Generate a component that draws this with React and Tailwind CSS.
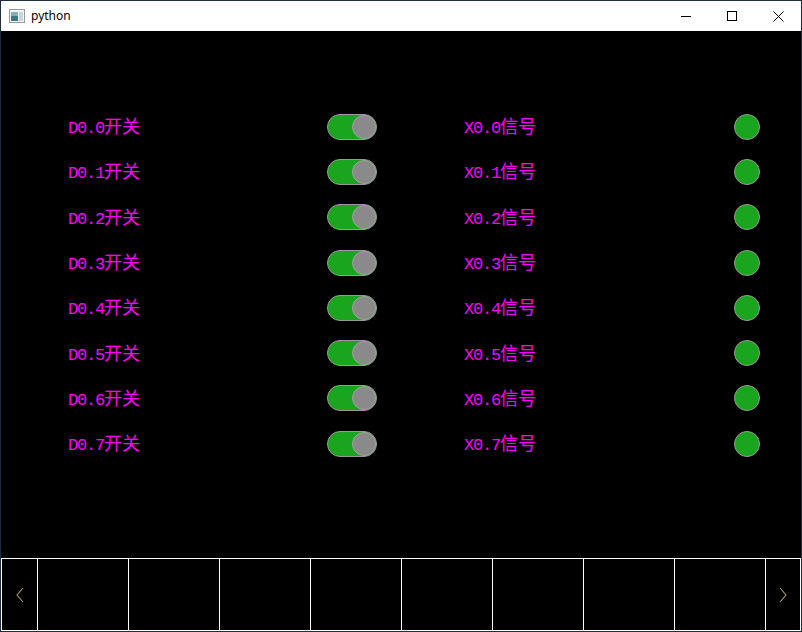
import React from 'react'

const rows = [0, 1, 2, 3, 4, 5, 6, 7];

const Label = ({ prefix, suffix }) => (
  <span className="flex items-baseline text-[#ff00ff] leading-none">
    <span className="text-[17px] tracking-[-1.2px]" style={{ fontFamily: '"Liberation Mono", monospace' }}>{prefix}</span>
    <span className="text-[18px]" style={{ fontFamily: '"Noto Sans CJK SC", sans-serif' }}>{suffix}</span>
  </span>
);

const Toggle = () => (
  <div className="w-[50px] h-[26px] rounded-full bg-[#1aa51e] border border-[#9a9a9a] flex items-center justify-end">
    <div className="w-[24px] h-[24px] rounded-full bg-[#8a8a8a] border border-[#a0a0a0]" />
  </div>
);

const Lamp = () => (
  <div className="w-[26px] h-[26px] rounded-full bg-[#1aa51e] border border-[#9a9a9a]" />
);

const Chevron = ({ dir }) => (
  <svg width="8" height="16" viewBox="0 0 8 16">
    <polyline
      points={dir === 'left' ? '7,1 1,8 7,15' : '1,1 7,8 1,15'}
      fill="none"
      stroke="#b09a70"
      strokeWidth="1.1"
    />
  </svg>
);

export default function App() {
  return (
    <div className="w-[802px] h-[632px] border border-[#1f2d3d] flex flex-col bg-black overflow-hidden">
      {/* title bar */}
      <div className="h-[30px] bg-white flex items-center shrink-0">
        <svg className="ml-[8px]" width="16" height="14" viewBox="0 0 16 14">
          <rect x="0.5" y="0.5" width="15" height="13" fill="#f4f4f4" stroke="#9a9a9a" />
          <rect x="2" y="3" width="7" height="9" fill="#3b7a8a" />
          <rect x="2" y="3" width="7" height="4" fill="#7fb0c0" />
          <rect x="10" y="3" width="4" height="9" fill="#c8d4d8" />
        </svg>
        <span className="ml-[6px] text-[12px] text-black" style={{ fontFamily: '"Noto Sans", sans-serif' }}>python</span>
        <div className="ml-auto flex items-center h-full">
          <div className="w-[46px] h-full flex items-center justify-center">
            <div className="w-[10px] h-px bg-black" />
          </div>
          <div className="w-[46px] h-full flex items-center justify-center">
            <div className="w-[10px] h-[10px] border border-black" />
          </div>
          <div className="w-[46px] h-full flex items-center justify-center">
            <svg width="11" height="11" viewBox="0 0 11 11">
              <path d="M0.5 0.5 L10.5 10.5 M10.5 0.5 L0.5 10.5" stroke="#000" strokeWidth="1" />
            </svg>
          </div>
        </div>
      </div>

      {/* content */}
      <div className="flex-1 pt-[73px]">
        {rows.map((i) => (
          <div key={i} className="h-[45.3px] flex items-center pl-[67px]">
            <div className="w-[259px]">
              <Label prefix={`D0.${i}`} suffix="开关" />
            </div>
            <Toggle />
            <div className="w-[87px]" />
            <div className="w-[270px]">
              <Label prefix={`X0.${i}`} suffix="信号" />
            </div>
            <Lamp />
          </div>
        ))}
      </div>

      {/* bottom bar */}
      <div className="h-[73px] shrink-0 border-t border-b border-white flex">
        <div className="w-[37px] border-l border-r border-white flex items-center justify-center">
          <Chevron dir="left" />
        </div>
        {[0, 1, 2, 3, 4, 5, 6, 7].map((c) => (
          <div key={c} className="w-[91px] border-r border-white" />
        ))}
        <div className="flex-1 border-r border-white flex items-center justify-center">
          <Chevron dir="right" />
        </div>
      </div>
    </div>
  );
}
